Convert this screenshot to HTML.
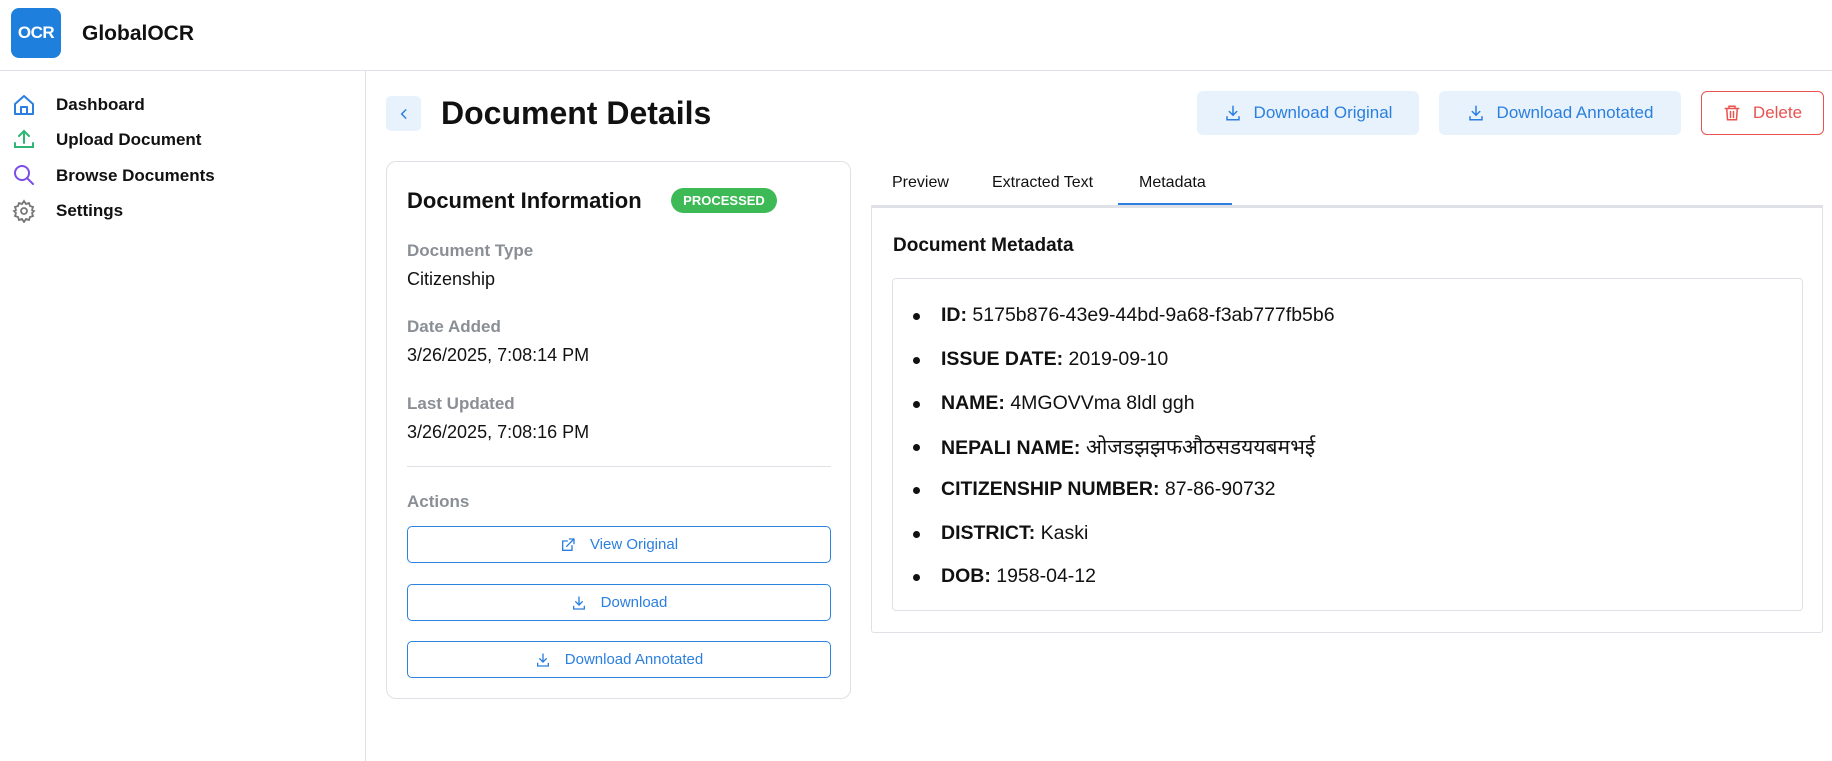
<!DOCTYPE html>
<html><head><meta charset="utf-8"><style>
*{box-sizing:border-box;margin:0;padding:0}
body{width:1832px;height:761px;background:#fff;font-family:"Liberation Sans",sans-serif;color:#111;position:relative;overflow:hidden}
.a{position:absolute}
.hdr{left:0;top:0;width:1832px;height:71px;border-bottom:1px solid #dfe1e6}
.side{left:365px;top:71px;width:1px;height:690px;background:#dfe1e6}
.nav{left:56px;font-size:17px;font-weight:bold;color:#111}
.ic{left:12px;width:24px;height:24px}
.btn{display:flex;align-items:center;justify-content:center;gap:12px;font-size:17px;border-radius:6px}
.lab{left:407px;font-size:17px;color:#8a8f96;font-weight:bold}
.val{left:407px;font-size:18px;color:#111}
.ab{left:407px;width:424px;height:37px;border:1.5px solid #2b83e0;border-radius:5px;color:#2b7fde;font-size:15px;display:flex;align-items:center;justify-content:center;gap:14px}
.li{left:941px;font-size:19.5px;color:#111}
.li b{font-weight:bold}
.dot{left:913px;width:7px;height:7px;border-radius:50%;background:#111}
</style></head><body>
<div class="a hdr"></div>
<div class="a" style="left:11px;top:8px;width:50px;height:50px;background:#1e7fdc;border-radius:8px;color:#fff;font-weight:bold;font-size:17px;display:flex;align-items:center;justify-content:center;letter-spacing:-0.5px">OCR</div>
<div class="a" style="left:82px;top:22px;font-size:21px;font-weight:bold">GlobalOCR</div>
<div class="a side"></div>

<svg class="a ic" style="top:93px" viewBox="0 0 24 24" fill="none" stroke="#2b7fde" stroke-width="2" stroke-linejoin="round"><path d="M3 11L12 3l9 8v10H3z"/><path d="M9 21v-7h6v7"/></svg>
<div class="a nav" style="top:95px">Dashboard</div>
<svg class="a ic" style="top:127px" viewBox="0 0 24 24" fill="none" stroke="#2bb673" stroke-width="2" stroke-linecap="round"><path d="M12 16V4M7 9l5-5 5 5M3 16v4h18v-4"/></svg>
<div class="a nav" style="top:130px">Upload Document</div>
<svg class="a ic" style="top:163px" viewBox="0 0 24 24" fill="none" stroke="#7b4ee6" stroke-width="2" stroke-linecap="round"><circle cx="10" cy="10" r="7"/><path d="M15 15l6 6"/></svg>
<div class="a nav" style="top:166px">Browse Documents</div>
<svg class="a ic" style="top:199px" viewBox="0 0 24 24" fill="none" stroke="#777" stroke-width="1.8"><circle cx="12" cy="12" r="3"/><path d="M12 2l2 3 3-1 1 3 3 1-1 3 2 1-2 2 1 3-3 1-1 3-3-1-2 3-2-3-3 1-1-3-3-1 1-3-2-2 2-1-1-3 3-1 1-3 3 1z"/></svg>
<div class="a nav" style="top:201px">Settings</div>

<div class="a" style="left:386px;top:96px;width:35px;height:35px;background:#e8f2fc;border-radius:5px;display:flex;align-items:center;justify-content:center"><svg width="14" height="14" viewBox="0 0 24 24" fill="none" stroke="#2b7fde" stroke-width="2.5" stroke-linecap="round"><path d="M15 5l-7 7 7 7"/></svg></div>
<div class="a" style="left:441px;top:95px;font-size:32px;font-weight:bold">Document Details</div>

<div class="a btn" style="left:1197px;top:91px;width:222px;height:44px;background:#e8f2fc;color:#2b7fde"><svg width="18" height="18" viewBox="0 0 24 24" fill="none" stroke="#2b7fde" stroke-width="2" stroke-linecap="round"><path d="M12 3v12M7 10l5 5 5-5M4 17v4h16v-4"/></svg>Download Original</div>
<div class="a btn" style="left:1439px;top:91px;width:242px;height:44px;background:#e8f2fc;color:#2b7fde"><svg width="18" height="18" viewBox="0 0 24 24" fill="none" stroke="#2b7fde" stroke-width="2" stroke-linecap="round"><path d="M12 3v12M7 10l5 5 5-5M4 17v4h16v-4"/></svg>Download Annotated</div>
<div class="a btn" style="left:1701px;top:91px;width:123px;height:44px;border:1.5px solid #e8524f;color:#e8524f"><svg width="18" height="18" viewBox="0 0 24 24" fill="none" stroke="#e8524f" stroke-width="2" stroke-linecap="round"><path d="M3 6h18M8 6V3h8v3M5 6l1 15h12l1-15M10 10v8M14 10v8"/></svg>Delete</div>

<div class="a" style="left:386px;top:161px;width:465px;height:538px;border:1px solid #dfe1e6;border-radius:10px"></div>
<div class="a" style="left:407px;top:188px;font-size:22px;font-weight:bold">Document Information</div>
<div class="a" style="left:671px;top:188px;width:106px;height:25px;background:#3dba55;border-radius:13px;color:#fff;font-size:13px;font-weight:bold;display:flex;align-items:center;justify-content:center">PROCESSED</div>
<div class="a lab" style="top:241px">Document Type</div>
<div class="a val" style="top:269px">Citizenship</div>
<div class="a lab" style="top:317px">Date Added</div>
<div class="a val" style="top:345px">3/26/2025, 7:08:14 PM</div>
<div class="a lab" style="top:394px">Last Updated</div>
<div class="a val" style="top:422px">3/26/2025, 7:08:16 PM</div>
<div class="a" style="left:407px;top:466px;width:424px;height:1px;background:#dfe1e6"></div>
<div class="a lab" style="top:492px">Actions</div>
<div class="a ab" style="top:526px"><svg width="16" height="16" viewBox="0 0 24 24" fill="none" stroke="#2b7fde" stroke-width="2" stroke-linecap="round"><path d="M18 13v7H4V6h7M14 3h7v7M10 14L21 3"/></svg>View Original</div>
<div class="a ab" style="top:584px"><svg width="16" height="16" viewBox="0 0 24 24" fill="none" stroke="#2b7fde" stroke-width="2" stroke-linecap="round"><path d="M12 3v12M7 10l5 5 5-5M4 17v4h16v-4"/></svg>Download</div>
<div class="a ab" style="top:641px"><svg width="16" height="16" viewBox="0 0 24 24" fill="none" stroke="#2b7fde" stroke-width="2" stroke-linecap="round"><path d="M12 3v12M7 10l5 5 5-5M4 17v4h16v-4"/></svg>Download Annotated</div>

<div class="a" style="left:892px;top:174px;font-size:16px">Preview</div>
<div class="a" style="left:992px;top:174px;font-size:16px">Extracted Text</div>
<div class="a" style="left:1139px;top:174px;font-size:16px">Metadata</div>
<div class="a" style="left:871px;top:205px;width:952px;height:428px;border:1px solid #dfe1e6;border-top:3px solid #dfe1e6;border-radius:0 0 3px 3px"></div>
<div class="a" style="left:1118px;top:203px;width:114px;height:2px;background:#2b7fde"></div>
<div class="a" style="left:893px;top:235px;font-size:19px;font-weight:bold">Document Metadata</div>
<div class="a" style="left:892px;top:278px;width:911px;height:333px;border:1px solid #dfe1e6;border-radius:4px"></div>
<div class="a dot" style="top:313px"></div><div class="a li" style="top:304px"><b>ID:</b> 5175b876-43e9-44bd-9a68-f3ab777fb5b6</div>
<div class="a dot" style="top:357px"></div><div class="a li" style="top:348px"><b>ISSUE DATE:</b> 2019-09-10</div>
<div class="a dot" style="top:401px"></div><div class="a li" style="top:392px"><b>NAME:</b> 4MGOVVma 8ldl ggh</div>
<div class="a dot" style="top:444px"></div><div class="a li" style="top:433px;font-family:'Liberation Sans','Noto Sans CJK SC',sans-serif"><b>NEPALI NAME:</b> <span style="font-size:21px">ओजडझझफऔठसडययबमभई</span></div>
<div class="a dot" style="top:487px"></div><div class="a li" style="top:478px"><b>CITIZENSHIP NUMBER:</b> 87-86-90732</div>
<div class="a dot" style="top:531px"></div><div class="a li" style="top:522px"><b>DISTRICT:</b> Kaski</div>
<div class="a dot" style="top:574px"></div><div class="a li" style="top:565px"><b>DOB:</b> 1958-04-12</div>
</body></html>
